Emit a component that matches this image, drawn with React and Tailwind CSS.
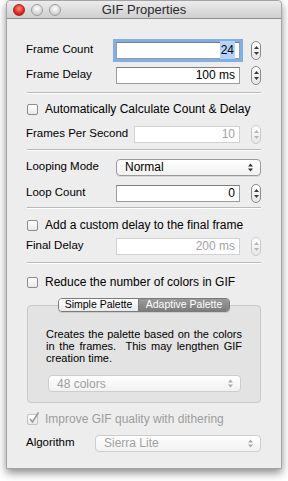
import React from "react";

const Stepper = ({ disabled }) => (
  <div
    className={`w-[10px] h-[19px] rounded-full border flex flex-col items-center justify-center gap-[3px] bg-gradient-to-b from-white to-[#e6e6e6] ${
      disabled ? "border-[#c9c9c9]" : "border-[#8a8a8a]"
    }`}
  >
    <svg width="5" height="3" viewBox="0 0 5 3">
      <path d="M0 3 L2.5 0 L5 3 Z" fill={disabled ? "#b5b5b5" : "#3a3a3a"} />
    </svg>
    <svg width="5" height="3" viewBox="0 0 5 3">
      <path d="M0 0 L2.5 3 L5 0 Z" fill={disabled ? "#b5b5b5" : "#3a3a3a"} />
    </svg>
  </div>
);

const UpDown = ({ disabled }) => (
  <svg width="5" height="9" viewBox="0 0 5 9">
    <path d="M0 3.5 L2.5 0.5 L5 3.5 Z" fill={disabled ? "#a9a9a9" : "#333"} />
    <path d="M0 5.5 L2.5 8.5 L5 5.5 Z" fill={disabled ? "#a9a9a9" : "#333"} />
  </svg>
);

const Field = ({ value, width, focused, disabled }) => (
  <div
    className={`h-[17px] bg-white border flex items-center justify-end pr-[4px] text-[12px] ${
      disabled
        ? "border-[#d2d2d2] text-[#a3a3a3]"
        : "border-[#9c9c9c] border-t-[#7e7e7e] text-black"
    } ${focused ? "shadow-[0_0_0_3px_#80aee6] border-[#6f9ad3]" : ""}`}
    style={{ width }}
  >
    {focused ? <span className="bg-[#b6d4fb] px-[1px]">{value}</span> : value}
  </div>
);

const Popup = ({ label, width, disabled }) => (
  <div
    className={`h-[17px] rounded-[4px] border flex items-center justify-between pl-[8px] pr-[7px] text-[12px] bg-gradient-to-b from-white to-[#f1f1f1] ${
      disabled
        ? "border-[#cdcdcd] text-[#a0a0a0]"
        : "border-[#9a9a9a] text-black shadow-[0_1px_0_rgba(0,0,0,0.08)]"
    }`}
    style={{ width }}
  >
    <span>{label}</span>
    <UpDown disabled={disabled} />
  </div>
);

const Checkbox = ({ checked, disabled }) => (
  <div
    className={`w-[11px] h-[11px] shrink-0 rounded-[2px] border relative bg-gradient-to-b from-white to-[#e9e9e9] ${
      disabled ? "border-[#c2c2c2]" : "border-[#8c8c8c]"
    }`}
  >
    {checked && (
      <svg
        className="absolute left-[0px] top-[-4px]"
        width="12"
        height="13"
        viewBox="0 0 12 13"
      >
        <path
          d="M2 8 L4.5 11 L10.5 1.5"
          stroke={disabled ? "#9a9a9a" : "#222"}
          strokeWidth="1.6"
          fill="none"
        />
      </svg>
    )}
  </div>
);

const CheckRow = ({ label, checked, disabled, className }) => (
  <div className={`h-[20px] flex items-center gap-[7px] pl-[1px] ${className}`}>
    <Checkbox checked={checked} disabled={disabled} />
    <span
      className={`text-[12px] whitespace-nowrap ${disabled ? "text-[#9d9d9d]" : "text-black"}`}
    >
      {label}
    </span>
  </div>
);

const Separator = ({ className }) => (
  <div className={`h-px bg-[#b9b9b9] border-b border-white box-content ml-[1px] ${className}`} />
);

const Light = ({ red }) => (
  <div
    className={`w-[12px] h-[12px] rounded-full border ${
      red
        ? "bg-[radial-gradient(circle_at_50%_35%,#ff8b80,#e0261c_60%,#a51510)] border-[#9d2a22]"
        : "bg-[radial-gradient(circle_at_50%_35%,#ffffff,#d8d8d8_60%,#bdbdbd)] border-[#9e9e9e]"
    }`}
  />
);

export default function App() {
  return (
    <div className="w-[288px] h-[481px] bg-white pl-[6px] font-['Liberation_Sans',Arial,sans-serif] text-black">
      <div className="w-[276px] h-[469px] bg-[#ededed] border border-[#a3a3a3] rounded-t-[4px] shadow-[0_4px_8px_rgba(0,0,0,0.45)] flex flex-col">
        {/* title bar */}
        <div className="h-[18px] shrink-0 flex items-center relative bg-gradient-to-b from-[#ececec] to-[#cfcfcf] border-b border-[#8e8e8e] rounded-t-[4px]">
          <div className="flex items-center gap-[6px] pl-[6px]">
            <Light red />
            <Light />
            <Light />
          </div>
          <div className="absolute inset-0 flex items-center justify-center text-[13px] text-[#2a2a2a]">
            GIF Properties
          </div>
        </div>

        <div className="pl-[19px] pr-[20px] flex flex-col text-[11.5px] whitespace-nowrap">
          <div className="h-[22px] mt-[20px] flex items-center">
            <span className="w-[90px]">Frame Count</span>
            <Field value="24" width="124px" focused />
            <div className="ml-auto">
              <Stepper />
            </div>
          </div>
          <div className="h-[22px] mt-[3px] flex items-center">
            <span className="w-[90px]">Frame Delay</span>
            <Field value="100 ms" width="124px" />
            <div className="ml-auto">
              <Stepper />
            </div>
          </div>

          <Separator className="mt-[6px]" />

          <CheckRow label="Automatically Calculate Count & Delay" className="mt-[5px]" />
          <div className="h-[22px] mt-[4px] flex items-center">
            <span className="w-[108px]">Frames Per Second</span>
            <Field value="10" width="106px" disabled />
            <div className="ml-auto">
              <Stepper disabled />
            </div>
          </div>

          <Separator className="mt-[4px]" />

          <div className="h-[22px] mt-[5px] flex items-center">
            <span className="w-[90px]">Looping Mode</span>
            <Popup label="Normal" width="145px" />
          </div>
          <div className="h-[22px] mt-[4px] flex items-center">
            <span className="w-[90px]">Loop Count</span>
            <Field value="0" width="124px" />
            <div className="ml-auto">
              <Stepper />
            </div>
          </div>

          <Separator className="mt-[3px]" />

          <CheckRow label="Add a custom delay to the final frame" className="mt-[6px]" />
          <div className="h-[22px] flex items-center">
            <span className="w-[90px]">Final Delay</span>
            <Field value="200 ms" width="124px" disabled />
            <div className="ml-auto">
              <Stepper disabled />
            </div>
          </div>

          <Separator className="mt-[5px]" />

          <CheckRow label="Reduce the number of colors in GIF" className="mt-[8px]" />

          {/* palette group */}
          <div className="mt-[6px] ml-[1px] flex flex-col">
            <div className="relative z-10 self-center flex h-[14px] text-[10.5px] rounded-[4px] border border-[#7a7a7a] overflow-hidden shadow-[0_1px_0_rgba(0,0,0,0.1)]">
              <div className="w-[80px] flex items-center justify-center bg-gradient-to-b from-white to-[#eaeaea] text-black border-r border-[#7a7a7a]">
                Simple Palette
              </div>
              <div className="w-[90px] flex items-center justify-center bg-gradient-to-b from-[#9a9a9a] to-[#7c7c7c] text-white">
                Adaptive Palette
              </div>
            </div>
            <div className="-mt-[7px] h-[98px] bg-[#e3e3e3] border border-[#c9c9c9] rounded-[4px] pt-[22px] px-[18px] flex flex-col">
              <p className="text-[11px] leading-[12px] text-justify whitespace-normal">
                Creates the palette based on the colors in the frames.&nbsp; This may lengthen GIF
                creation time.
              </p>
              <div className="mt-[11px] ml-[2px]">
                <Popup label="48 colors" width="193px" disabled />
              </div>
            </div>
          </div>

          <CheckRow label="Improve GIF quality with dithering" checked disabled className="mt-[6px]" />
          <div className="h-[22px] mt-[3px] flex items-center">
            <span className="w-[69px]">Algorithm</span>
            <Popup label="Sierra Lite" width="166px" disabled />
          </div>
        </div>
      </div>
    </div>
  );
}
